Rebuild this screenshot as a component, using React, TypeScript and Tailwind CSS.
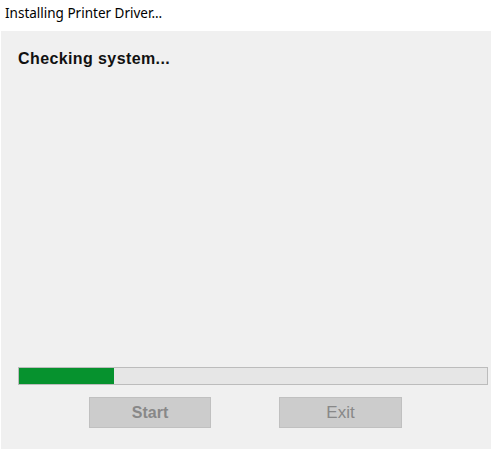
export default function App() {
  return (
    <div className="w-[493px] h-[449px] bg-white flex flex-col overflow-hidden" style={{ fontFamily: '"Liberation Sans", Arial, sans-serif' }}>
      <div className="h-[31px] pl-[5px] pt-[5px] text-[13.5px] leading-[16px] text-black" style={{ fontFamily: '"Noto Sans", sans-serif' }}>
        Installing Printer Driver...
      </div>
      <div className="flex-1 ml-[1px] mr-[2px] bg-[#f0f0f0] flex flex-col">
        <div className="pl-[17px] pt-[19px] text-[16px] leading-[18px] font-bold text-[#111] tracking-[0.4px]">
          Checking system...
        </div>
        <div className="flex-1" />
        <div className="ml-[17px] mr-[3px] h-[18px] border border-[#bcbcbc] bg-[#e6e6e6] flex">
          <div className="h-full bg-[#06922e]" style={{ width: 95 }} />
        </div>
        <div className="flex pl-[88px] gap-[68px] pt-[12px] pb-[21px]">
          <div className="w-[122px] h-[31px] bg-[#cccccc] border border-[#c0c0c0] flex items-center justify-center text-[16px] font-bold text-[#888888]">
            Start
          </div>
          <div className="w-[123px] h-[31px] bg-[#cccccc] border border-[#c0c0c0] flex items-center justify-center text-[17px] text-[#888888]">
            Exit
          </div>
        </div>
      </div>
    </div>
  );
}
